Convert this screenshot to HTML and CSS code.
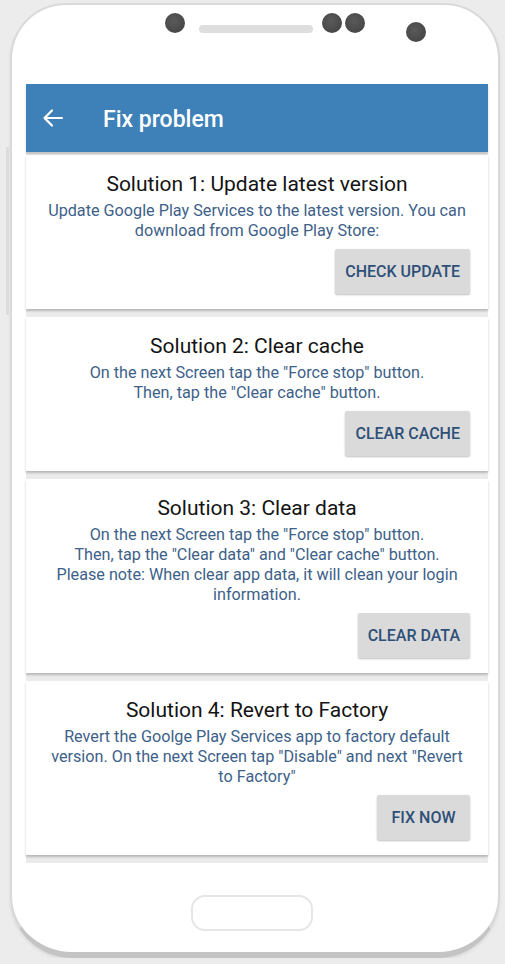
FILE: index.html
```html
<!DOCTYPE html>
<html lang="en">
<head>
    <meta charset="UTF-8">
    <meta name="viewport" content="width=device-width, initial-scale=1.0">
    <title>Fix problem</title>
    <link rel="stylesheet" href="styles.css">
</head>
<body>
    <div class="phone">
        <span class="side-key"></span>
        <div class="phone-top">
            <span class="dot"></span>
            <span class="speaker"></span>
            <span class="dot dot-2"></span>
            <span class="dot dot-3"></span>
            <span class="dot sensor"></span>
        </div>

        <div class="screen">
            <header class="app-bar">
                <svg class="back" width="22" height="20" viewBox="0 0 22 20">
                    <path d="M20 10H3M10 2.5L2.5 10L10 17.5" fill="none" stroke="#fff" stroke-width="2.2" stroke-linecap="round" stroke-linejoin="round"/>
                </svg>
                <h1>Fix problem</h1>
            </header>

            <div class="list">
                <section class="card">
                    <h2>Solution 1: Update latest version</h2>
                    <p>Update Google Play Services to the latest version. You can download from Google Play Store:</p>
                    <div class="actions"><button>CHECK UPDATE</button></div>
                </section>

                <section class="card">
                    <h2>Solution 2: Clear cache</h2>
                    <p>On the next Screen tap the "Force stop" button.<br>Then, tap the "Clear cache" button.</p>
                    <div class="actions"><button>CLEAR CACHE</button></div>
                </section>

                <section class="card">
                    <h2>Solution 3: Clear data</h2>
                    <p>On the next Screen tap the "Force stop" button.<br>Then, tap the "Clear data" and "Clear cache" button.<br>Please note: When clear app data, it will clean your login information.</p>
                    <div class="actions"><button>CLEAR DATA</button></div>
                </section>

                <section class="card">
                    <h2>Solution 4: Revert to Factory</h2>
                    <p>Revert the Goolge Play Services app to factory default version. On the next Screen tap "Disable" and next "Revert to Factory"</p>
                    <div class="actions"><button>FIX NOW</button></div>
                </section>
            </div>
        </div>

        <div class="phone-bottom">
            <span class="home"></span>
        </div>
    </div>
</body>
</html>
```

FILE: styles.css
```css
body {
    margin: 0;
    background: #ececec;
    font-family: Roboto, "Liberation Sans", Arial, sans-serif;
}

.phone {
    position: relative;
    box-sizing: border-box;
    width: 490px;
    height: 955px;
    margin: 3px 0 0 10px;
    background: #fff;
    border: 2px solid #d9d9d9;
    border-bottom: 6px solid #c4c4c4;
    border-radius: 56px 56px 62px 62px;
    box-shadow: 0 2px 3px rgba(0,0,0,0.08);
}

.side-key {
    position: absolute;
    left: -6px;
    top: 142px;
    width: 3px;
    height: 168px;
    background: #dcdcdc;
}

.phone-top {
    display: flex;
    align-items: flex-start;
    height: 79px;
    padding: 8px 0 0 153px;
    box-sizing: border-box;
}

.dot {
    width: 20px;
    height: 20px;
    border-radius: 50%;
    background: radial-gradient(circle at 45% 40%, #5a5a5a, #404040);
}

.speaker {
    width: 114px;
    height: 8px;
    margin: 12px 0 0 14px;
    border-radius: 4px;
    background: #dedede;
}

.dot-2 {
    margin-left: 9px;
}

.dot-3 {
    margin-left: 3px;
}

.sensor {
    margin: 9px 0 0 41px;
}

.screen {
    width: 462px;
    margin-left: 14px;
    background: #fff;
}

.app-bar {
    display: flex;
    align-items: center;
    height: 68px;
    padding-left: 16px;
    background: #3e81b8;
    box-shadow: 0 2px 2px rgba(0,0,0,0.18);
    position: relative;
}

.app-bar h1 {
    margin: 0 0 0 39px;
    font-size: 23px;
    font-weight: 500;
    color: #fff;
    padding-top: 3px;
}

.list {
    display: flex;
    flex-direction: column;
    gap: 8px;
    padding: 3px 0 8px;
    background: #ebebeb;
}

.card {
    padding: 15px 20px 15px;
    background: #fff;
    text-align: center;
    box-shadow: 0 2px 2px rgba(0,0,0,0.22);
}

.card h2 {
    margin: 0;
    font-size: 21px;
    font-weight: 400;
    line-height: 28px;
    color: #141414;
}

.card p {
    margin: 3px 0 0;
    font-size: 16.2px;
    line-height: 20px;
    color: #3d6189;
}

.actions {
    display: flex;
    justify-content: flex-end;
    margin-top: 8px;
    margin-right: -2px;
}

button {
    min-width: 93px;
    height: 45px;
    padding: 0 10px;
    border: none;
    border-radius: 2px;
    background: #dadada;
    box-shadow: 0 1px 2px rgba(0,0,0,0.25);
    font-family: inherit;
    font-size: 16px;
    font-weight: 500;
    color: #2e5078;
    cursor: pointer;
}

.phone-bottom {
    display: flex;
    justify-content: center;
    padding: 32px 6px 0 0;
}

.home {
    width: 118px;
    height: 32px;
    border: 2px solid #e6e6e6;
    border-radius: 14px;
}
```
